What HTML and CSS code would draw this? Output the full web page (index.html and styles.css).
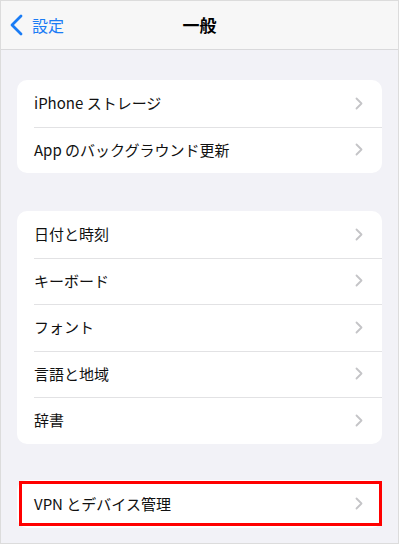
FILE: index.html
```html
<!DOCTYPE html>
<html lang="ja">
<head>
<meta charset="utf-8">
<title>一般</title>
<link rel="stylesheet" href="styles.css">
</head>
<body>
<div class="screen">
  <header class="navbar">
    <div class="back">
      <svg class="back-icon" width="14" height="24" viewBox="0 0 14 24"><path d="M12 3 L3 12 L12 21" fill="none" stroke="#1a7cf5" stroke-width="2.8" stroke-linecap="round" stroke-linejoin="round"/></svg>
      <span class="back-label">設定</span>
    </div>
    <div class="title">一般</div>
    <div class="spacer"></div>
  </header>
  <main class="content">
    <section class="card">
      <div class="row"><span class="label">iPhone ストレージ</span><svg class="chev" width="8" height="13" viewBox="0 0 8 13"><path d="M1.5 1.5 L6.5 6.5 L1.5 11.5" fill="none" stroke="#c4c4c7" stroke-width="1.8" stroke-linecap="round" stroke-linejoin="round"/></svg></div>
      <div class="row"><span class="label">App のバックグラウンド更新</span><svg class="chev" width="8" height="13" viewBox="0 0 8 13"><path d="M1.5 1.5 L6.5 6.5 L1.5 11.5" fill="none" stroke="#c4c4c7" stroke-width="1.8" stroke-linecap="round" stroke-linejoin="round"/></svg></div>
    </section>
    <section class="card">
      <div class="row"><span class="label">日付と時刻</span><svg class="chev" width="8" height="13" viewBox="0 0 8 13"><path d="M1.5 1.5 L6.5 6.5 L1.5 11.5" fill="none" stroke="#c4c4c7" stroke-width="1.8" stroke-linecap="round" stroke-linejoin="round"/></svg></div>
      <div class="row"><span class="label">キーボード</span><svg class="chev" width="8" height="13" viewBox="0 0 8 13"><path d="M1.5 1.5 L6.5 6.5 L1.5 11.5" fill="none" stroke="#c4c4c7" stroke-width="1.8" stroke-linecap="round" stroke-linejoin="round"/></svg></div>
      <div class="row"><span class="label">フォント</span><svg class="chev" width="8" height="13" viewBox="0 0 8 13"><path d="M1.5 1.5 L6.5 6.5 L1.5 11.5" fill="none" stroke="#c4c4c7" stroke-width="1.8" stroke-linecap="round" stroke-linejoin="round"/></svg></div>
      <div class="row"><span class="label">言語と地域</span><svg class="chev" width="8" height="13" viewBox="0 0 8 13"><path d="M1.5 1.5 L6.5 6.5 L1.5 11.5" fill="none" stroke="#c4c4c7" stroke-width="1.8" stroke-linecap="round" stroke-linejoin="round"/></svg></div>
      <div class="row"><span class="label">辞書</span><svg class="chev" width="8" height="13" viewBox="0 0 8 13"><path d="M1.5 1.5 L6.5 6.5 L1.5 11.5" fill="none" stroke="#c4c4c7" stroke-width="1.8" stroke-linecap="round" stroke-linejoin="round"/></svg></div>
    </section>
    <section class="card card-last">
      <div class="row"><span class="label">VPN とデバイス管理</span><svg class="chev" width="8" height="13" viewBox="0 0 8 13"><path d="M1.5 1.5 L6.5 6.5 L1.5 11.5" fill="none" stroke="#c4c4c7" stroke-width="1.8" stroke-linecap="round" stroke-linejoin="round"/></svg></div>
      <div class="highlight"></div>
    </section>
  </main>
</div>
</body>
</html>
```
FILE: styles.css
```css
html, body {
  margin: 0;
  padding: 0;
  background: #ffffff;
}
body {
  font-family: "Noto Sans CJK JP", "Noto Sans", sans-serif;
  color: #111111;
}
.screen {
  width: 399px;
  height: 544px;
  box-sizing: border-box;
  border: 1px solid #dcdcdc;
  background: #f2f2f7;
  overflow: hidden;
}
.navbar {
  height: 49px;
  box-sizing: border-box;
  background: #f7f7f7;
  border-bottom: 1px solid #d9d9db;
  display: grid;
  grid-template-columns: 1fr auto 1fr;
  align-items: center;
}
.back {
  display: flex;
  align-items: center;
  gap: 9px;
  padding-left: 8px;
  color: #1a7cf5;
}
.back-icon {
  display: block;
}
.back-label {
  font-size: 16px;
  line-height: 20px;
}
.title {
  font-size: 17px;
  font-weight: 700;
  line-height: 20px;
  color: #000;
}
.content {
  padding: 30px 16px 0;
  display: flex;
  flex-direction: column;
  gap: 38px;
}
.card {
  background: #ffffff;
  border-radius: 10px;
  position: relative;
}
.card-last {
  margin-top: -2px;
}
.row {
  height: 46.5px;
  box-sizing: border-box;
  display: flex;
  align-items: center;
  justify-content: space-between;
  padding: 0 19px 0 17px;
  position: relative;
}
.row + .row::before {
  content: "";
  position: absolute;
  top: 0;
  left: 17px;
  right: 0;
  height: 1px;
  background: #e2e2e4;
}
.label {
  font-size: 15px;
  line-height: 20px;
  color: #111;
}
.chev {
  display: block;
}
.card-last .row {
  height: 48px;
}
.highlight {
  position: absolute;
  left: 2px;
  right: 0;
  top: 1px;
  bottom: 2px;
  border: 3px solid #ff0000;
  box-sizing: border-box;
}
```
